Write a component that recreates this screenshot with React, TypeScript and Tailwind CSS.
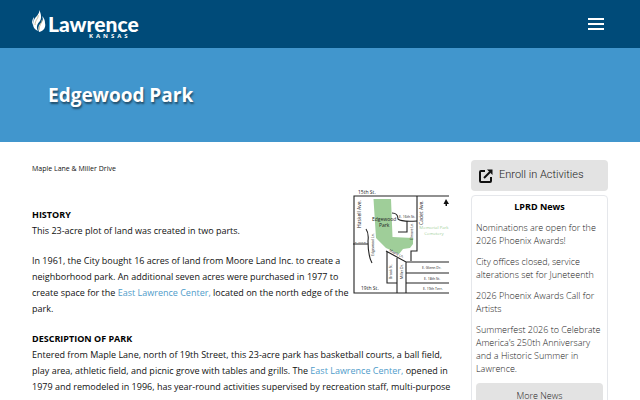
import React from 'react'

const news = [
  'Nominations are open for the 2026 Phoenix Awards!',
  'City offices closed, service alterations set for Juneteenth',
  '2026 Phoenix Awards Call for Artists',
  'Summerfest 2026 to Celebrate America’s 250th Anniversary and a Historic Summer in Lawrence.',
]

const Logo = () => (
  <a href="#" aria-label="Lawrence Kansas" className="flex items-start text-white">
    <svg viewBox="0 0 14 23" className="w-[14px] h-[23px]" fill="none">
      <path d="M7 0C8 4 4 6 2 10C0 14 1 19 6 21C4 17 5 14 8 11C10 8 9 3 7 0Z" fill="#fff" />
      <path d="M10 6C12 10 10 12 8 14C6 16 6 19 7 22C12 21 14 17 13 13C13 10 12 8 10 6Z" fill="#fff" />
      <path d="M6 5C7 8 3 10 3 15M10 10C10 13 7 15 7 20" stroke="#b8aa83" strokeWidth=".8" />
      <path d="M2 7C0 10 0 12 0 15C1 12 2 10 2 7Z" fill="#fff" />
    </svg>
    <div className="flex flex-col items-end ml-0.5 mt-1">
      <span className="font-['Lato','Liberation_Sans',sans-serif] font-black text-[21px] leading-5">Lawrence</span>
      <span className="font-['Open_Sans',sans-serif] font-bold text-[6px] leading-[5px] tracking-[3px] mr-2">KANSAS</span>
    </div>
  </a>
)

const ParkMap = () => (
  <svg viewBox="0 0 96 108" role="img" aria-label="Map of Edgewood Park" className="float-right w-24 h-27 mr-0.5 font-['Open_Sans',sans-serif]">
    <path d="M20.500 10H38L39.500 48L60 49V55L57 59L50 60L46 65L33 59L23 49Z" fill="#9fce99" />
    <g fill="none" stroke="#222" strokeWidth="1.100">
      <path d="M96 7H1V104H96" />
      <path d="M64 7V62H58V72M13 40Q16 44 15 52Q15 67 19 74M0 55H15" />
      <path d="M39 24Q45 24 45 30Q48 33 64 32M54 32V43H45" />
      <path d="M33 62L53 73H96M34 63V94H44M44 69V104M53 73V104M53 84H96M53 94H96" />
    </g>
    <path d="M93 10L90.500 15H92.500V17H94V15H96Z" fill="#111" />
    <g fill="#222" fontSize="5">
      <text x="5" y="5">15th St.</text>
      <text x="8" y="101">19th St.</text>
      <text x="19" y="32">Edgewood</text>
      <text x="26" y="38">Park</text>
      <text transform="translate(8 39) rotate(-90)">Haskell Ave.</text>
      <text transform="translate(70 36) rotate(-90)">Cadet Ave.</text>
      <g fontSize="3.500">
        <text x="46" y="29">E. 16th St.</text>
        <text x="2" y="54" fontSize="2.500">E. 17th St.</text>
        <text x="69" y="80">E. Glenn Dr.</text>
        <text x="71" y="91">E. 18th St.</text>
        <text x="70" y="101">E. 19th Terr.</text>
        <text transform="translate(21 67) rotate(-90)">Edgewood Ln.</text>
        <text transform="translate(60 51) rotate(-90)">Elmore Ln.</text>
        <text transform="translate(39 90) rotate(-90)">Brook St.</text>
        <text transform="translate(50 90) rotate(-90)">Miller Dr.</text>
        <text transform="translate(36 62) rotate(27)">Maple Ln.</text>
      </g>
    </g>
    <g fill="#9fd09b" fontSize="4.300" textAnchor="middle">
      <text x="81" y="40">Memorial Park</text>
      <text x="81" y="46">Cemetery</text>
    </g>
  </svg>
)

const App = () => {
  return (
    <div className="min-h-screen bg-white font-['Roboto','Open_Sans',sans-serif] text-[#222222]">

      <header className="flex items-start justify-between h-12 px-8 pt-2.5 bg-[#004b79]">
        <Logo />
        <button aria-label="Menu" className="flex flex-col gap-[3px] mr-1 mt-2">
          <span className="w-4 h-0.5 bg-white" />
          <span className="w-4 h-0.5 bg-white" />
          <span className="w-4 h-0.5 bg-white" />
        </button>
      </header>

      <section className="px-12 py-8 bg-[#4196cd]">
        <h1 className="font-['Open_Sans',sans-serif] font-bold text-[19px] leading-[30px] text-white [text-shadow:1px_2px_2px_#00000080]">Edgewood Park</h1>
      </section>

      <main className="flex items-start gap-5 px-8 pt-[18px]">
        <article className="flex-1 min-w-0 font-['Open_Sans',sans-serif] text-[9px] leading-4 text-[#111111]">
          <p className="text-[7px] mt-px mb-3">Maple Lane &amp; Miller Drive</p>
          <ParkMap />
          <h2 className="font-bold text-black pt-[18px]">HISTORY</h2>
          <p>This 23-acre plot of land was created in two parts.</p>
          <p className="mt-[14px]">
            In 1961, the City bought 16 acres of land from Moore Land Inc. to create a neighborhood park. An additional seven acres were purchased in 1977 to create space for the <a href="#" className="text-[#4f9cca]">East Lawrence Center,</a> located on the north edge of the park.
          </p>
          <h2 className="font-bold text-black mt-[14px]">DESCRIPTION OF PARK</h2>
          <p>
            Entered from Maple Lane, north of 19th Street, this 23-acre park has basketball courts, a ball field, play area, athletic field, and picnic grove with tables and grills. The <a href="#" className="text-[#4f9cca]">East Lawrence Center,</a> opened in 1979 and remodeled in 1996, has year-round activities supervised by recreation staff, multi-purpose
          </p>
        </article>

        <aside className="w-[137px] text-[#222222]">
          <a href="#" className="flex items-center gap-1.5 h-[31px] px-2 rounded-sm bg-[#e3e3e3] text-[11px] font-light">
            <svg viewBox="0 0 14 14" className="w-3.5 h-3.5" fill="none" stroke="#111" strokeWidth="2">
              <path d="M6 2H2Q1 2 1 3V12Q1 13 2 13H11Q12 13 12 12V8" />
              <path d="M5 9L11 3" />
              <path d="M8 .500H13.500V6Z" fill="#111" stroke="none" />
            </svg>
            Enroll in Activities
          </a>
          <section className="mt-1 px-1 pt-[3px] pb-2 border border-gray-200 rounded-sm font-['Open_Sans',sans-serif] text-[9px] leading-[13px] font-light">
            <h2 className="text-center font-bold text-[9px] leading-4 text-black">LPRD News</h2>
            <ul className="flex flex-col gap-2 mt-1.5">
              {news.map((item) => (
                <li key={item}><a href="#" className="block">{item}</a></li>
              ))}
            </ul>
            <button className="w-full h-6 mt-2 rounded-sm bg-[#e3e3e3]">More News</button>
          </section>
        </aside>
      </main>

    </div>
  )
}

export default App
